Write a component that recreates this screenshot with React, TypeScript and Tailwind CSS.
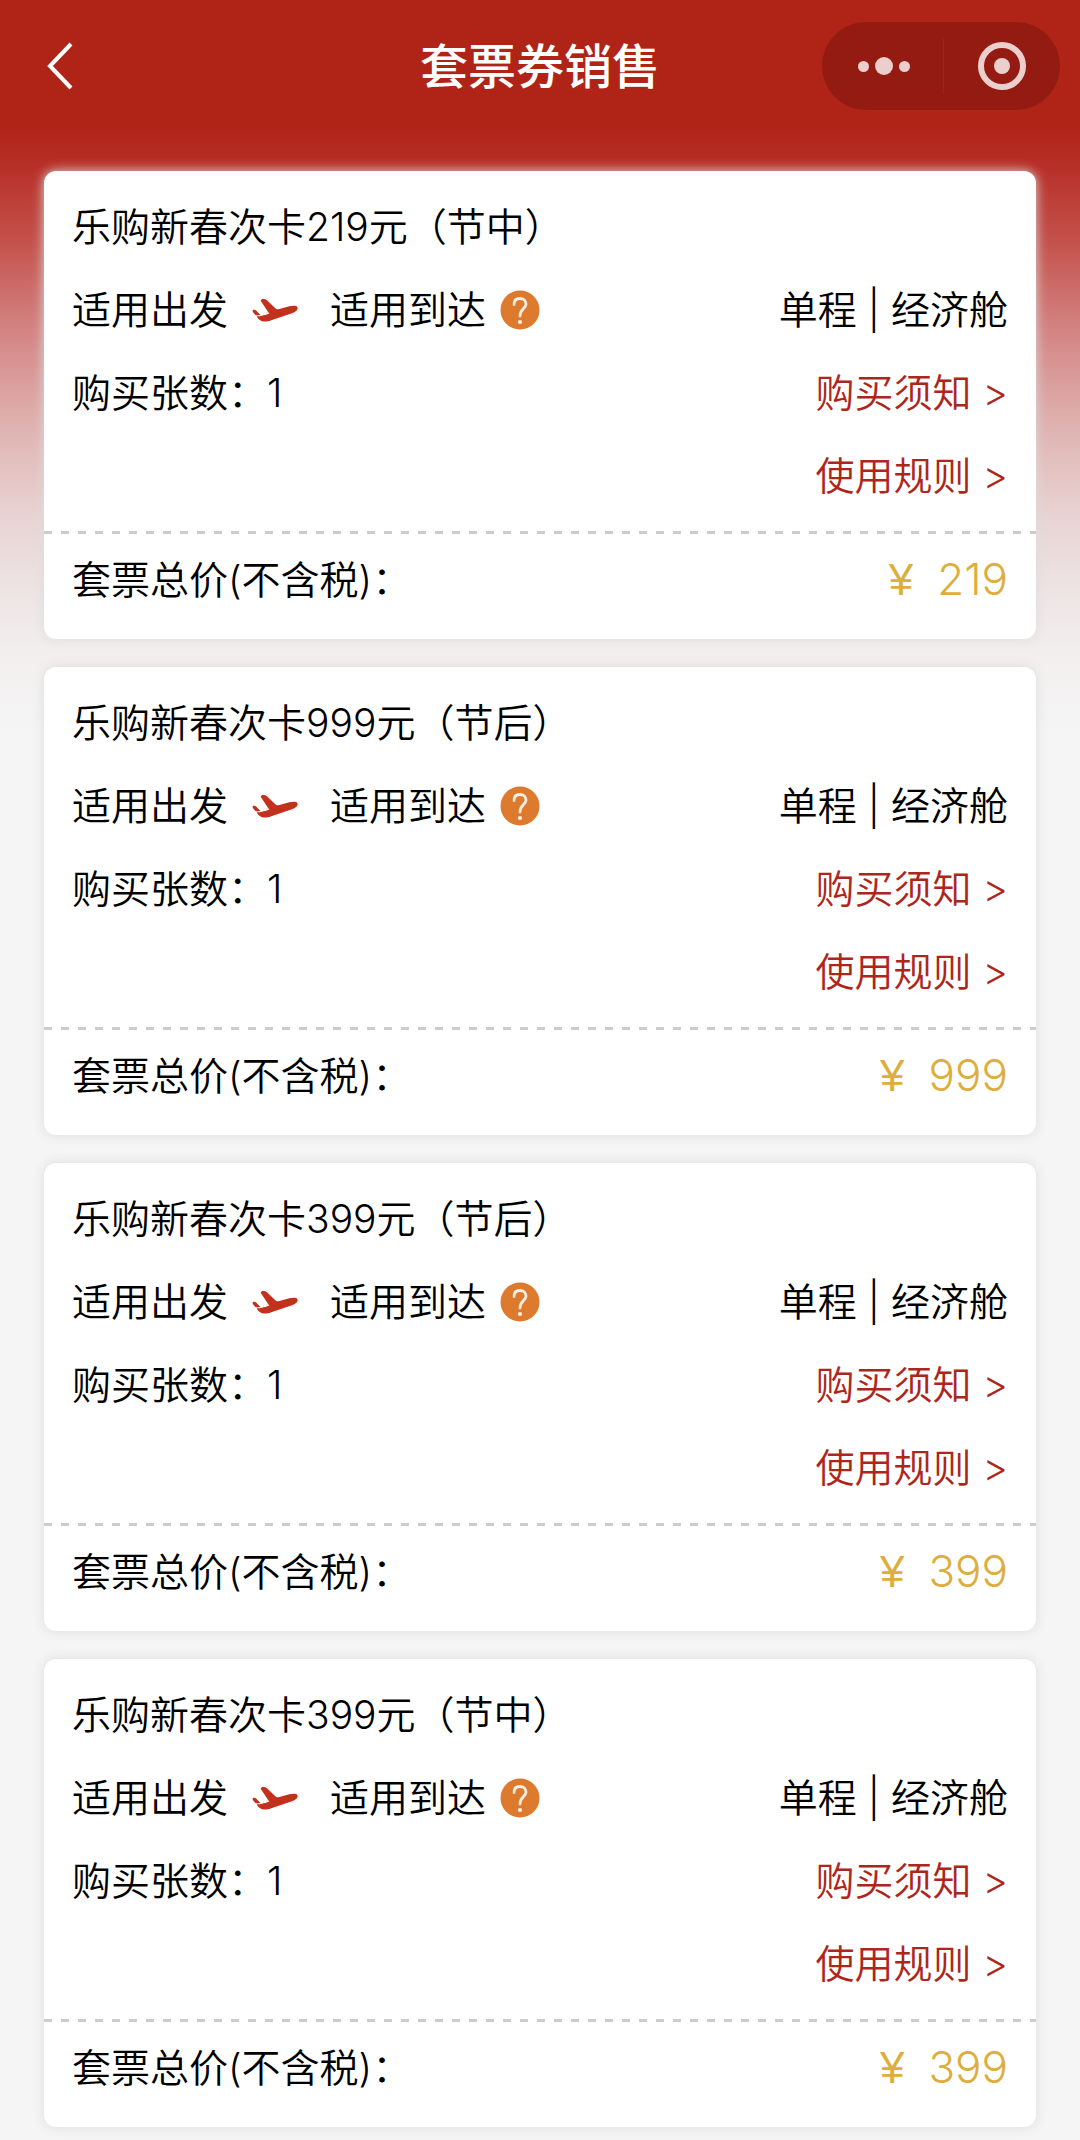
interface Ticket {
    id: number;
    name: string;
    count: number;
    price: number;
}

const tickets: Ticket[] = [
    { id: 1, name: "乐购新春次卡219元（节中）", count: 1, price: 219 },
    { id: 2, name: "乐购新春次卡999元（节后）", count: 1, price: 999 },
    { id: 3, name: "乐购新春次卡399元（节后）", count: 1, price: 399 },
    { id: 4, name: "乐购新春次卡399元（节中）", count: 1, price: 399 },
];

function PlaneIcon() {
    return (
        <svg viewBox="38 57 138 72" className="h-6 w-[46px] shrink-0" fill="#c2311c" aria-hidden="true">
            <path d="M64 65 C65 58 77 59 83 64 L108 88 C111 91 115 91 120 90 L150 82 C163 79 175 79 175 87 C175 94 168 99 158 103 L98 123 C87 127 77 129 68 127 C60 124 55 118 52 112 C64 112 76 108 90 104 Z" />
            <path d="M40 98 C39 91 47 91 51 95 L63 107 C57 110 52 110 48 108 Z" />
        </svg>
    );
}

function HelpIcon() {
    return (
        <svg viewBox="0 0 40 40" className="size-10" fill="none" aria-hidden="true">
            <circle cx="20" cy="20" r="19.5" fill="#de7a2d" />
            <path d="M14 14.500 C14 10.500 16.500 8.500 20 8.500 C23.500 8.500 26 10.800 26 14 C26 18.500 20 19 20 26" stroke="#fdeee0" strokeWidth="2.8" strokeLinecap="round" />
            <circle cx="20" cy="32" r="2.100" fill="#fdeee0" />
        </svg>
    );
}

function Header() {
    return (
        <header className="grid grid-cols-[1fr_auto_1fr] items-center px-5 pt-[22px] text-white">
            <button type="button" aria-label="返回" className="ml-4 flex h-[88px] w-12 items-center justify-center">
                <svg viewBox="0 0 28 48" className="h-12 w-7" fill="none" stroke="currentColor" strokeWidth="4">
                    <path d="M25 2 L4 24 L25 46" />
                </svg>
            </button>
            <h1 className="pt-0.5 text-[48px] leading-none font-medium">套票券销售</h1>
            <div className="flex h-[88px] w-[238px] items-center justify-self-end rounded-full bg-[#941b12] text-[#ebcfcd]">
                <button type="button" aria-label="更多" className="flex h-full flex-1 items-center justify-center gap-1.5 pl-1">
                    <span className="size-[11px] rounded-full bg-current" />
                    <span className="size-[18px] rounded-full bg-current" />
                    <span className="size-[11px] rounded-full bg-current" />
                </button>
                <span className="h-14 w-px bg-[#9c241b]" />
                <button type="button" aria-label="关闭" className="flex h-full flex-1 items-center justify-center">
                    <span className="flex size-12 items-center justify-center rounded-full border-6 border-current">
                        <span className="size-4 rounded-full bg-current" />
                    </span>
                </button>
            </div>
        </header>
    );
}

function TicketCard({ ticket }: { ticket: Ticket }) {
    return (
        <li className="rounded-xl bg-white text-[39px] leading-[83px] shadow-[0_0_12px_#dcdcdc]">
            <div className="px-7 py-3.5">
                <h2>{ticket.name}</h2>
                <div className="flex items-center justify-between">
                    <div className="flex items-center">
                        <span>适用出发</span>
                        <span className="mr-8 ml-6 flex">
                            <PlaneIcon />
                        </span>
                        <span>适用到达</span>
                        <button type="button" aria-label="说明" className="ml-3.5">
                            <HelpIcon />
                        </button>
                    </div>
                    <span>单程 | 经济舱</span>
                </div>
                <div className="flex justify-between">
                    <span>购买张数：{ticket.count}</span>
                    <div className="flex flex-col items-end text-[#ad261b]">
                        <a href="#notice">购买须知 &gt;</a>
                        <a href="#rules">使用规则 &gt;</a>
                    </div>
                </div>
            </div>
            <div className="h-[3px] bg-[repeating-linear-gradient(to_right,#cccccc_0_8px,transparent_8px_17px)]" />
            <div className="flex items-center justify-between px-7 pt-1 pb-[18px]">
                <span>套票总价(不含税)：</span>
                <span className="flex gap-6 text-[44px] text-[#ddae3c]">
                    <span className="font-['Liberation_Sans',sans-serif]">¥</span>
                    <span>{ticket.price}</span>
                </span>
            </div>
        </li>
    );
}

export default function App() {
    return (
        <div className="min-h-screen bg-[#f5f5f5] bg-[linear-gradient(to_bottom,#b02418_0px,#b02418_125px,#b72f27_165px,#c4524c_242px,#ce7371_299px,#d68f8e_352px,#dca9a7_405px,#e4c5c3_474px,#e9d6d6_527px,#eee4e4_593px,#f2eeee_650px,#f5f5f5_730px)] font-[Inter,'Noto_Sans_CJK_SC',sans-serif] font-[350] text-black">
            <Header />
            <main className="px-11 pt-[61px] pb-3">
                <ul className="flex flex-col gap-7">
                    {tickets.map((ticket) => (
                        <TicketCard key={ticket.id} ticket={ticket} />
                    ))}
                </ul>
            </main>
        </div>
    );
}
